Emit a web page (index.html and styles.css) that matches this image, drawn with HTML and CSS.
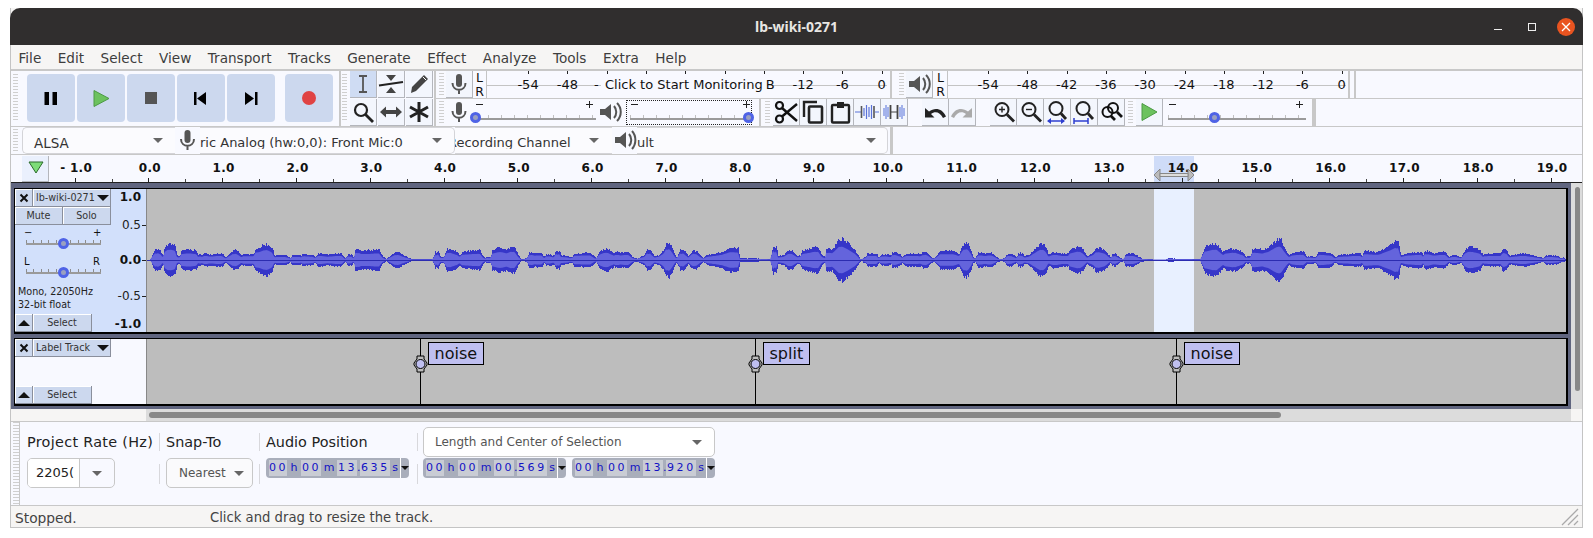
FILE: index.html
```html
<!DOCTYPE html>
<html>
<head>
	<meta charset="utf-8">
	<title>lb-wiki-0271</title>
	<link rel="stylesheet" href="styles.css">
</head>
<body>
<div class="window">
	<div class="titlebar">
		<div></div>
		<div class="title">lb-wiki-0271</div>
		<div class="winbtns">
			<div class="winbtn"><span class="win-min"></span></div>
			<div class="winbtn"><span class="win-max"></span></div>
			<div class="winbtn"><span class="win-close"><svg width="10" height="10" viewBox="0 0 10 10"><path d="M1 1L9 9M9 1L1 9" stroke="#fff" stroke-width="1.3"/></svg></span></div>
		</div>
	</div>
	<div class="menubar">
		<span>File</span><span>Edit</span><span>Select</span><span>View</span><span>Transport</span><span>Tracks</span><span>Generate</span><span>Effect</span><span>Analyze</span><span>Tools</span><span>Extra</span><span>Help</span>
	</div>

	<div class="toolbars">
		<div class="transport">
			<div class="grip grip-tall"></div>
			<div class="tbtn first"><svg width="48" height="48" viewBox="0 0 48 48"><path d="M17.5 18h4.500v13h-4.500zM25.500 18h4.500v13h-4.500z" fill="#000"/></svg></div>
			<div class="tbtn"><svg width="48" height="48" viewBox="0 0 48 48"><path d="M17 16.500L32 24.500L17 32.500z" fill="#6cc25e" stroke="#4c9a44"/></svg></div>
			<div class="tbtn"><svg width="48" height="48" viewBox="0 0 48 48"><rect x="18" y="18" width="12" height="12" fill="#555"/></svg></div>
			<div class="tbtn"><svg width="48" height="48" viewBox="0 0 48 48"><path d="M17 18h2.500v13H17zM29 18v13l-9-6.500z" fill="#000"/></svg></div>
			<div class="tbtn"><svg width="48" height="48" viewBox="0 0 48 48"><path d="M18 18v13l9-6.500zM28 18h2.500v13H28z" fill="#000"/></svg></div>
			<div class="tbtn rec"><svg width="48" height="48" viewBox="0 0 48 48"><circle cx="24" cy="24" r="7" fill="#e04343"/></svg></div>
		</div>
		<div class="tools">
			<div class="grip grip-tall"></div>
			<div class="toolgrid">
				<div class="ibtn on"><svg width="26" height="26" viewBox="0 0 26 26"><path d="M9 5h8M9 21h8M13 5v16" stroke="#555" stroke-width="1.800" fill="none"/></svg></div>
				<div class="ibtn"><svg width="26" height="26" viewBox="0 0 26 26"><path d="M8 4h10l-5 6zM8 22h10l-5-6z" fill="#444"/><path d="M1 14.500L25 11" stroke="#222" stroke-width="2.200"/></svg></div>
				<div class="ibtn"><svg width="26" height="26" viewBox="0 0 26 26"><path d="M5 22l1-6L18 4l4 4L10 20z" fill="#444"/><path d="M17 6l3 3" stroke="#fff"/></svg></div>
				<div class="ibtn"><svg width="26" height="26" viewBox="0 0 26 26"><circle cx="11" cy="11" r="6" fill="none" stroke="#222" stroke-width="2.200"/><path d="M15.500 15.500L23 23" stroke="#222" stroke-width="2.800"/></svg></div>
				<div class="ibtn"><svg width="26" height="26" viewBox="0 0 26 26"><path d="M2 13l6-5.500v3.500h10V7.500l6 5.500-6 5.500V15H8v3.500z" fill="#444"/></svg></div>
				<div class="ibtn"><svg width="26" height="26" viewBox="0 0 26 26"><path d="M13 3v20M4 8l18 10M22 8L4 18" stroke="#222" stroke-width="3"/></svg></div>
			</div>
		</div>
		<div class="stack">
			<div class="row">
				<div class="divider"></div>
				<div class="grip"></div>
				<div class="ibtn mic-btn"><svg width="26" height="26" viewBox="0 0 26 26"><rect x="10" y="3" width="6" height="13" rx="3" fill="#555"/><path d="M6.500 12c0 9 13 9 13 0M13 19v4" fill="none" stroke="#555" stroke-width="2"/></svg></div>
				<div class="lr"><span>L</span><span>R</span></div>
				<div class="meter meter-rec">
					<span>-54</span><span>-48</span><span class="partial">-</span><span></span><span></span><span></span><span></span><span>-12</span><span>-6</span><span>0</span>
					<div class="monitor"><b>Click to Start Monitoring</b><i>B</i></div>
				</div>
				<div class="divider div-meter"></div>
				<div class="grip grip-out"></div>
				<div class="ibtn spk-btn"><svg width="26" height="26" viewBox="0 0 26 26"><path d="M3 10h5l6-5v16l-6-5H3z" fill="#555"/><path d="M17 7c3 3.500 3 8.500 0 12M20 4c5 5 5 13 0 18" fill="none" stroke="#555" stroke-width="2"/></svg></div>
				<div class="lr lr-out"><span>L</span><span>R</span></div>
				<div class="meter meter-out">
					<span>-54</span><span>-48</span><span>-42</span><span>-36</span><span>-30</span><span>-24</span><span>-18</span><span>-12</span><span>-6</span><span>0</span>
				</div>
				<div class="divider div-end"></div>
				<div class="divider div-end2"></div>
			</div>
			<div class="row">
				<div class="divider"></div>
				<div class="grip"></div>
				<div class="icon mic-ico"><svg width="26" height="26" viewBox="0 0 26 26"><rect x="10" y="3" width="6" height="13" rx="3" fill="#555"/><path d="M6.500 12c0 9 13 9 13 0M13 19v4" fill="none" stroke="#555" stroke-width="2"/></svg></div>
				<div class="slider slider-rec"><em class="minus"></em><em class="plus"></em><div class="sl-track"></div><div class="thumb"></div></div>
				<div class="icon spk-ico"><svg width="26" height="26" viewBox="0 0 26 26"><path d="M3 10h5l6-5v16l-6-5H3z" fill="#555"/><path d="M17 7c3 3.500 3 8.500 0 12M20 4c5 5 5 13 0 18" fill="none" stroke="#555" stroke-width="2"/></svg></div>
				<div class="slider slider-play"><em class="minus"></em><em class="plus"></em><div class="sl-track"></div><div class="thumb"></div></div>
				<div class="divider div-edit"></div>
				<div class="grip grip-edit"></div>
				<div class="ibtn"><svg width="26" height="26" viewBox="0 0 26 26"><circle cx="6.500" cy="6.500" r="3.500" fill="none" stroke="#111" stroke-width="2.200"/><circle cx="6.500" cy="20" r="3.500" fill="none" stroke="#111" stroke-width="2.200"/><path d="M9 9l15 13M9 17.500L24 5" stroke="#111" stroke-width="2.400"/></svg></div>
				<div class="ibtn"><svg width="26" height="26" viewBox="0 0 26 26"><path d="M17 3H4v15" fill="none" stroke="#222" stroke-width="2.400"/><rect x="9" y="7.500" width="13" height="16" rx="1" fill="none" stroke="#222" stroke-width="2.600"/></svg></div>
				<div class="ibtn"><svg width="26" height="26" viewBox="0 0 26 26"><rect x="5" y="6" width="17" height="17.500" rx="1" fill="none" stroke="#222" stroke-width="2.400"/><rect x="10" y="3" width="7" height="6" fill="#222"/></svg></div>
				<div class="ibtn"><svg width="26" height="26" viewBox="0 0 26 26"><path d="M1 13h6M21 13h4M10 9v8M12.500 6v14M15 8v10M17.500 6v14" stroke="#5a72d8" stroke-width="1.200" fill="none"/><path d="M7.500 7v12M20 7v12" stroke="#555" stroke-width="1.600"/></svg></div>
				<div class="ibtn"><svg width="26" height="26" viewBox="0 0 26 26"><path d="M3 9v8M5 6v14M7 8v10M19 8v10M21 6v14M23 9v8" stroke="#6f86e0" stroke-width="1.200" fill="none"/><path d="M9.500 6v14M16.500 6v14" stroke="#444" stroke-width="1.800"/><path d="M9.500 13h7" stroke="#444"/></svg></div>
				<div class="ibtn undo"><svg width="26" height="26" viewBox="0 0 26 26"><path d="M3 9v9.500h9.500L9 15c4-3 9-2 12 4l3-1.500C20.500 9.500 13 8 7 12.500z" fill="#222"/></svg></div>
				<div class="ibtn"><svg width="26" height="26" viewBox="0 0 26 26"><path d="M23 9v9.500h-9.500L17 15c-4-3-9-2-12 4l-3-1.500C5.500 9.500 13 8 19 12.500z" fill="#aaa"/></svg></div>
				<div class="ibtn zoomfirst"><svg width="26" height="26" viewBox="0 0 26 26"><circle cx="12" cy="10.500" r="6.500" fill="none" stroke="#222" stroke-width="2"/><path d="M17 15.500L24 22.500" stroke="#222" stroke-width="2.800"/><path d="M9 10.500h6M12 7.500v6" stroke="#222" stroke-width="1.400"/></svg></div>
				<div class="ibtn"><svg width="26" height="26" viewBox="0 0 26 26"><circle cx="12" cy="10.500" r="6.500" fill="none" stroke="#222" stroke-width="2"/><path d="M17 15.500L24 22.500" stroke="#222" stroke-width="2.800"/><path d="M9 10.500h6" stroke="#222" stroke-width="1.400"/></svg></div>
				<div class="ibtn"><svg width="26" height="26" viewBox="0 0 26 26"><circle cx="12" cy="9.500" r="6.500" fill="none" stroke="#222" stroke-width="2"/><path d="M17 14.500L22 20" stroke="#222" stroke-width="2.800"/><path d="M4 22h16" stroke="#2f3fd0" stroke-width="1.500"/><path d="M3 22l4-3v6zM21 22l-4-3v6z" fill="#2f3fd0"/></svg></div>
				<div class="ibtn"><svg width="26" height="26" viewBox="0 0 26 26"><circle cx="12" cy="9.500" r="6.500" fill="none" stroke="#222" stroke-width="2"/><path d="M17 14.500L22 20" stroke="#222" stroke-width="2.800"/><path d="M3 22h14" stroke="#2f3fd0" stroke-width="1.500"/><path d="M3 19v6M17 19v6" stroke="#2f3fd0" stroke-width="1.500"/></svg></div>
				<div class="ibtn"><svg width="26" height="26" viewBox="0 0 26 26"><circle cx="9.500" cy="13" r="5" fill="none" stroke="#111" stroke-width="2"/><circle cx="15" cy="9" r="5" fill="none" stroke="#111" stroke-width="2"/><path d="M13 17l4 4M19 13l5 5" stroke="#111" stroke-width="2.800"/></svg></div>
				<div class="grip grip-play"></div>
				<div class="ibtn"><svg width="26" height="26" viewBox="0 0 26 26"><path d="M6 4.500L21 13L6 21.500z" fill="#6cc25e" stroke="#4c9a44"/></svg></div>
				<div class="slider slider-speed"><em class="minus"></em><em class="plus"></em><div class="sl-track"></div><div class="thumb"></div></div>
				<div class="divider div-speed"></div>
			</div>
		</div>
	</div>

	<div class="devices">
		<div class="grip grip-dev"></div>
		<div class="combo combo-host"><div class="combo-text">ALSA</div><div class="arrow"></div></div>
		<div class="icon dev-ico"><svg width="25" height="26" viewBox="0 0 25 26"><rect x="9.500" y="3" width="6" height="13" rx="3" fill="#555"/><path d="M6 12c0 9 13 9 13 0M12.500 19v4" fill="none" stroke="#555" stroke-width="2"/></svg></div>
		<div class="combo combo-mic"><div class="combo-text">ric Analog (hw:0,0): Front Mic:0</div><div class="arrow"></div></div>
		<div class="combo combo-chan"><div class="combo-text">Recording Channel</div><div class="arrow"></div></div>
		<div class="icon dev-ico"><svg width="25" height="26" viewBox="0 0 25 26"><path d="M3 10h5l6-5v16l-6-5H3z" fill="#555"/><path d="M17 7c3 3.500 3 8.500 0 12M20 4c4.500 5 4.500 13 0 18" fill="none" stroke="#555" stroke-width="2"/></svg></div>
		<div class="combo combo-out"><div class="combo-text">ult</div><div class="arrow"></div></div>
		<div class="divider div-dev"></div>
	</div>

	<div class="ruler">
		<div class="ruler-sel"></div>
		<div class="playhead"><svg width="16" height="13" viewBox="0 0 16 13"><path d="M1 1h14L8 12z" fill="#7ddc78" stroke="#2c6b2c"/></svg></div>
		<div class="secs">
			<span>- 1.0</span><span>0.0</span><span>1.0</span><span>2.0</span><span>3.0</span><span>4.0</span><span>5.0</span><span>6.0</span><span>7.0</span><span>8.0</span><span>9.0</span><span>10.0</span><span>11.0</span><span>12.0</span><span>13.0</span><span>14.0</span><span>15.0</span><span>16.0</span><span>17.0</span><span>18.0</span><span>19.0</span>
		</div>
		<svg class="sel-handle" width="42" height="14" viewBox="0 0 42 14"><path d="M7 1v12L1 7zM35 1v12l6-6z" fill="#bbb" stroke="#888"/><path d="M7 5.500h28v3H7z" fill="#ddd" stroke="#888"/></svg>
	</div>

	<div class="trackarea">
		<div class="tracks">
			<div class="track wavetrack">
				<div class="panel">
					<div class="panel-head">
						<div class="pbtn pclose"><svg width="10" height="10" viewBox="0 0 10 10"><path d="M1.500 1.500L8.500 8.500M8.500 1.500L1.500 8.500" stroke="#111" stroke-width="2"/></svg></div>
						<div class="pbtn ptitle"><span>lb-wiki-0271</span><i></i></div>
					</div>
					<div class="panel-head">
						<div class="pbtn pmute">Mute</div>
						<div class="pbtn psolo">Solo</div>
					</div>
					<div class="pslider"><em class="pl">−</em><em class="pr">+</em><div class="pl-track"></div><div class="thumb"></div></div>
					<div class="pslider"><em class="pl">L</em><em class="pr">R</em><div class="pl-track"></div><div class="thumb"></div></div>
					<div class="pinfo">Mono, 22050Hz<br>32-bit float</div>
					<div class="panel-foot">
						<div class="pbtn pclose"><i class="up"></i></div>
						<div class="pbtn pselect">Select</div>
					</div>
				</div>
				<div class="vruler">
					<div class="strong"><span>1.0</span></div>
					<div class="tick"><span>0.5</span></div>
					<div class="strong tick long"><span>0.0</span></div>
					<div class="tick"><span>-0.5</span></div>
					<div class="strong"><span>-1.0</span></div>
				</div>
				<div class="wave" id="wave"></div>
			</div>
			<div class="track labeltrack">
				<div class="panel panel-label">
					<div class="panel-head">
						<div class="pbtn pclose"><svg width="10" height="10" viewBox="0 0 10 10"><path d="M1.500 1.500L8.500 8.500M8.500 1.500L1.500 8.500" stroke="#111" stroke-width="2"/></svg></div>
						<div class="pbtn ptitle"><span>Label Track</span><i></i></div>
					</div>
					<div class="panel-foot">
						<div class="pbtn pclose"><i class="up"></i></div>
						<div class="pbtn pselect">Select</div>
					</div>
				</div>
				<div class="vruler vruler-empty"></div>
				<div class="labels">
					<div class="mark m1"><svg width="15" height="18" viewBox="0 0 15 18"><path d="M4 1h7v3l3 4v2l-3 4v3H4v-3l-3-4V8l3-4z" fill="#bdbdbd" stroke="#000"/><ellipse cx="7.500" cy="9" rx="4.500" ry="4.500" fill="#bfbff0" stroke="#000"/></svg><span>noise</span></div>
					<div class="mark m2"><svg width="15" height="18" viewBox="0 0 15 18"><path d="M4 1h7v3l3 4v2l-3 4v3H4v-3l-3-4V8l3-4z" fill="#bdbdbd" stroke="#000"/><ellipse cx="7.500" cy="9" rx="4.500" ry="4.500" fill="#bfbff0" stroke="#000"/></svg><span>split</span></div>
					<div class="mark m3"><svg width="15" height="18" viewBox="0 0 15 18"><path d="M4 1h7v3l3 4v2l-3 4v3H4v-3l-3-4V8l3-4z" fill="#bdbdbd" stroke="#000"/><ellipse cx="7.500" cy="9" rx="4.500" ry="4.500" fill="#bfbff0" stroke="#000"/></svg><span>noise</span></div>
				</div>
			</div>
		</div>
		<div class="vscroll"><div class="vthumb"></div></div>
	</div>

	<div class="hscroll">
		<div class="hs-left"></div>
		<div class="hs-track"><div class="hthumb"></div></div>
		<div class="hs-corner"></div>
	</div>

	<div class="selbar">
		<div class="grip grip-sel"></div>
		<div class="selcol col-rate">
			<div class="sellabel rate-label">Project Rate (Hz)</div>
			<div class="bigcombo rate"><div class="rate-val">2205(</div><div class="rate-btn"><div class="arrow"></div></div></div>
		</div>
		<div class="sep"><i></i><i></i></div>
		<div class="selcol col-snap">
			<div class="sellabel">Snap-To</div>
			<div class="bigcombo snap"><span>Nearest</span><div class="arrow"></div></div>
		</div>
		<div class="sep"><i></i><i></i></div>
		<div class="selcol col-pos">
			<div class="sellabel">Audio Position</div>
			<div class="clock">
				<span class="c c2">00</span><span class="u uh">h</span><span class="c">00</span><span class="u um">m</span><span class="c">13</span><span class="u ud">.</span><span class="c c3">635</span><span class="u us">s</span><span class="drop"></span>
			</div>
		</div>
		<div class="sep"><i></i><i></i></div>
		<div class="selcol col-sel">
			<div class="bigcombo lencombo"><span>Length and Center of Selection</span><div class="arrow"></div></div>
			<div class="clocks">
				<div class="clock">
					<span class="c c2">00</span><span class="u uh">h</span><span class="c">00</span><span class="u um">m</span><span class="c">00</span><span class="u ud">.</span><span class="c c3">569</span><span class="u us">s</span><span class="drop"></span>
				</div>
				<div class="clock">
					<span class="c c2">00</span><span class="u uh">h</span><span class="c">00</span><span class="u um">m</span><span class="c">13</span><span class="u ud">.</span><span class="c c3">920</span><span class="u us">s</span><span class="drop"></span>
				</div>
			</div>
		</div>
	</div>

	<div class="statusbar">
		<div class="st-left">Stopped.</div>
		<div class="st-hint">Click and drag to resize the track.</div>
		<svg class="sizer" width="18" height="18" viewBox="0 0 18 18"><path d="M1 17L17 1M7 17L17 7M13 17l4-4" stroke="#aaa" stroke-width="1.300"/></svg>
	</div>
</div>
<script src="waveform.js"></script>
</body>
</html>
```

FILE: styles.css
```css
html, body {
	margin: 0;
	padding: 0;
	background: #fff;
	overflow: hidden;
}
body {
	font-family: "DejaVu Sans", sans-serif;
	color: #222;
}
.window {
	box-sizing: border-box;
	width: 1573px;
	height: 520px;
	margin: 8px 0 0 10px;
	border: 1px solid #c4c4c4;
	border-top: 0;
	background: #f6f5f4;
}

/* title + menu */
.titlebar {
	height: 37px;
	margin: 0 -1px;
	display: grid;
	grid-template-columns: 1fr auto 1fr;
	align-items: center;
	background: #302e2e;
	border-radius: 10px 10px 0 0;
}
.title {
	font-family: "Noto Sans", sans-serif;
	font-weight: 700;
	font-size: 14px;
	color: #e8e6e3;
}
.winbtns {
	display: flex;
	justify-content: flex-end;
}
.winbtn {
	width: 34px;
	height: 37px;
	display: flex;
	align-items: center;
	justify-content: center;
}
.win-min {
	width: 8px;
	height: 1px;
	background: #eee;
	margin-top: 6px;
	border-radius: 0;
}
.win-max {
	box-sizing: border-box;
	width: 8px;
	height: 8px;
	border: 1px solid #eee;
}
.win-close {
	width: 18px;
	height: 18px;
	border-radius: 50%;
	background: #e95420;
	display: flex;
	align-items: center;
	justify-content: center;
}
.menubar {
	box-sizing: border-box;
	height: 26px;
	padding: 3px 0 0 7.500px;
	display: flex;
	gap: 16.500px;
	font-size: 13.600px;
	line-height: 20px;
	color: #3d3d3d;
	border-bottom: 2px solid #c8c8c8;
}

/* toolbars */
.toolbars {
	display: flex;
	height: 56px;
	background: #f8f9ff;
}
.grip {
	flex: none;
	width: 5px;
	height: 22px;
	margin: 2px 0 0 3px;
	background: repeating-linear-gradient(#cfcfcf 0 1px, #f8f9ff 1px 3px);
}
.grip-tall {
	height: 48px;
	margin: 3px 0 0 2px;
}
.transport {
	display: flex;
	flex: none;
	width: 328px;
	height: 55px;
	border-bottom: 1px solid #c8c8c8;
}
.tbtn {
	flex: none;
	width: 48px;
	height: 48px;
	margin: 3px 0 0 2px;
	background: #ccd8ee;
	border-radius: 4px;
}
.tbtn.first {
	margin-left: 9px;
}
.tbtn.rec {
	margin-left: 10px;
}
.tools {
	display: flex;
	flex: none;
	width: 95px;
	height: 55px;
	box-shadow: inset 2px 0 0 #c8c8c8;
	border-bottom: 1px solid #c8c8c8;
	padding-left: 2px;
	margin-right: -2px;
}
.tools .grip-tall {
	margin-left: 1px;
}
.toolgrid {
	display: grid;
	grid-template-columns: 27px 27px 27px;
	grid-template-rows: 27px 27px;
	gap: 1px 1px;
	margin-left: 3px;
}
.ibtn {
	flex: none;
	box-sizing: border-box;
	width: 27px;
	height: 27px;
	background: #f3f6fd;
	border-right: 1px solid #b4b6bc;
	border-bottom: 1px solid #b4b6bc;
}
.ibtn.on {
	background: #cfdcf3;
}
.ibtn svg, .icon svg {
	display: block;
}
.stack {
	flex: 1;
	min-width: 0;
}
.row {
	display: flex;
	height: 27px;
	border-bottom: 1px solid #c8c8c8;
}
.divider {
	flex: none;
	width: 2px;
	height: 100%;
	background: #c8c8c8;
}
.mic-btn {
	margin-left: 2px;
}
.spk-btn {
	margin-left: 2px;
}
.lr {
	flex: none;
	width: 11px;
	margin-left: 1px;
	font-size: 12.500px;
	line-height: 13.500px;
	color: #111;
	text-align: center;
}
.lr span {
	display: block;
}
.lr-out {
	margin-left: 2px;
}
.meter {
	position: relative;
	flex: none;
	display: flex;
	overflow: hidden;
	height: 27px;
	margin-left: 1px;
	background: linear-gradient(#c4c4c4, #c4c4c4) 0 14px / 100% 1px no-repeat;
	border-left: 1px solid #c4c4c4;
	box-sizing: border-box;
}
.meter-rec {
	width: 401px;
	padding-left: 21.400px;
}
.meter-out {
	width: 399px;
	padding-left: 20.400px;
}
.meter span {
	position: relative;
	flex: none;
	width: 39.300px;
	text-align: center;
	font-size: 13px;
	line-height: 27px;
	color: #111;
}
.meter span.partial {
	text-align: left;
	text-indent: 7px;
}
.meter span::before {
	content: "";
	position: absolute;
	left: 50%;
	top: 0;
	width: 1px;
	height: 3px;
	background: #222;
}
.monitor {
	position: absolute;
	left: 114px;
	top: 6px;
	display: flex;
	height: 16px;
	font-size: 13px;
	line-height: 16px;
	color: #111;
}
.monitor b {
	font-weight: 400;
	padding: 0 4px;
	background: #f8f9ff;
}
.monitor i {
	font-style: normal;
	margin-left: -1px;
}
.div-meter {
	margin-left: 3px;
}
.grip-out {
	margin-left: 7px;
}
.div-end {
	margin-left: 2px;
}
.div-end2 {
	margin-left: 4px;
}
.icon {
	flex: none;
}
.mic-ico {
	width: 26px;
	margin-left: 2px;
}
.spk-ico {
	width: 26px;
	margin-left: 1px;
}

/* sliders */
.slider {
	position: relative;
	flex: none;
	height: 27px;
	box-sizing: border-box;
}
.slider em {
	position: absolute;
	top: 5px;
	width: 7px;
	height: 1px;
	background: #222;
}
.slider em.minus {
	left: 1px;
}
.slider em.plus {
	right: 3px;
}
.slider em.plus::after {
	content: "";
	position: absolute;
	left: 3px;
	top: -3px;
	width: 1px;
	height: 7px;
	background: #222;
}
.sl-track {
	position: absolute;
	left: 0;
	right: 0;
	top: 16px;
	height: 5px;
	background:
		linear-gradient(#9a9a9a, #9a9a9a) 0 100% / 100% 2px no-repeat,
		repeating-linear-gradient(90deg, #c0c0c0 0 1px, transparent 1px 13px);
}
.thumb {
	position: absolute;
	box-sizing: border-box;
	width: 11px;
	height: 11px;
	border: 3px solid #4f63e6;
	border-radius: 50%;
	background: #9aa0c0;
}
.slider .thumb {
	top: 13px;
}
.slider-rec {
	width: 121px;
	margin-left: 3px;
}
.slider-rec .thumb {
	left: -5px;
}
.slider-play {
	width: 128px;
	outline: 1px dotted #222;
	outline-offset: -2px;
	margin-left: 2px;
}
.slider-play .sl-track {
	left: 5px;
	right: 1px;
}
.slider-play em.minus {
	left: 6px;
}
.slider-play .thumb {
	right: -1px;
}
.slider-speed {
	width: 138px;
	margin-left: 5px;
}
.slider-speed .thumb {
	left: 41px;
}
.div-edit {
	margin-left: 6px;
}
.grip-edit {
	margin-left: 4px;
}
.grip-edit + .ibtn {
	margin-left: 3px;
}
.undo {
	margin-left: 14px;
}
.zoomfirst {
	margin-left: 14px;
}
.grip-play {
	margin-left: 3px;
}
.grip-play + .ibtn {
	margin-left: 3px;
}
.div-speed {
	width: 4px;
	margin-left: 6px;
}

.devices {
	display: flex;
	height: 27px;
	background: #f8f9ff;
	border-bottom: 1px solid #c8c8c8;
}
.grip-dev {
	margin: 2px 0 0 2px;
	width: 5px;
}
.combo {
	position: relative;
	flex: none;
	box-sizing: border-box;
	height: 27px;
	background: #fbfbfe;
	border: 1px solid #d4d4d8;
	font-size: 13px;
	color: #333;
}
.combo-text {
	overflow: hidden;
	white-space: nowrap;
	height: 14px;
	line-height: 16px;
	margin-top: 7px;
}
.combo-host .combo-text {
	font-size: 13.500px;
}
.arrow {
	width: 0;
	height: 0;
	border-left: 5px solid transparent;
	border-right: 5px solid transparent;
	border-top: 5px solid #666;
}
.combo .arrow {
	position: absolute;
	top: 10px;
}
.combo-host {
	width: 153px;
	margin-left: 4px;
	border-radius: 5px 0 0 5px;
	border-right: 0;
}
.combo-host .combo-text {
	padding-left: 11px;
}
.combo-host .arrow {
	left: 130px;
}
.dev-ico {
	width: 25px;
	background: #f8f9ff;
}
.combo-mic {
	width: 255px;
	border-left: 0;
	border-radius: 0 5px 5px 0;
}
.combo-mic .arrow {
	left: 232px;
}
.combo-chan {
	width: 157px;
	border-left: 0;
	border-right: 0;
}
.combo-chan .combo-text {
	text-indent: -7px;
}
.combo-chan .arrow {
	left: 134px;
}
.combo-out {
	width: 251px;
	border-left: 0;
	border-radius: 0 5px 5px 0;
}
.combo-out .arrow {
	left: 229px;
}
.div-dev {
	width: 3px;
	margin-left: 2px;
}

/* timeline */
.ruler {
	position: relative;
	display: flex;
	overflow: hidden;
	height: 28px;
	box-sizing: border-box;
	padding-left: 11px;
	background: #f8f9ff;
	border-bottom: 1px solid #222;
}
.ruler-sel {
	position: absolute;
	left: 1143px;
	top: 1px;
	bottom: 0;
	width: 40px;
	background: #cfdcf8;
}
.playhead {
	position: relative;
	z-index: 2;
	flex: none;
	width: 27px;
	box-sizing: border-box;
	padding: 5px 0 0 6px;
	background: #eaf0fd;
	border-right: 1px solid #b4b6bc;
	border-bottom: 1px solid #b4b6bc;
	margin-top: 1px;
}
.playhead svg {
	display: block;
}
.secs {
	position: relative;
	display: flex;
	margin-left: -11.300px;
	font-size: 12px;
	font-weight: 700;
	line-height: 26px;
	color: #111;
}
.secs span {
	position: relative;
	flex: none;
	width: 73.800px;
	text-align: center;
	letter-spacing: .3px;
	padding-left: 3px;
	box-sizing: border-box;
	white-space: pre;
}
.secs span::before {
	content: "";
	position: absolute;
	left: 36.900px;
	bottom: 0;
	width: 1px;
	height: 4px;
	background: #222;
}
.secs span::after {
	content: "";
	position: absolute;
	left: 100%;
	bottom: 0;
	width: 1px;
	height: 3px;
	background: #444;
}
.sel-handle {
	position: absolute;
	left: 1142px;
	top: 13px;
}

/* tracks */
.trackarea {
	display: flex;
	height: 226px;
}
.tracks {
	flex: none;
	box-sizing: border-box;
	width: 1560px;
	padding: 5px 3px 3px;
	background: #60657f;
}
.vscroll {
	flex: 1;
	background: #dcdcdc;
}
.vthumb {
	width: 5px;
	height: 204px;
	margin: 4px 0 0 4px;
	border-radius: 3px;
	background: #888;
}
.track {
	display: flex;
	box-sizing: border-box;
	border: 1px solid #000;
	border-right-width: 2px;
	border-bottom-width: 2px;
}
.wavetrack {
	height: 146px;
}
.labeltrack {
	height: 68px;
	margin-top: 4px;
}
.panel {
	flex: none;
	display: flex;
	flex-direction: column;
	width: 96px;
	background: #d2e0fb;
}
.panel-label {
	background: #f8f9ff;
}
.panel-head, .panel-foot {
	display: flex;
	height: 18px;
	flex: none;
}
.panel-foot {
	margin-top: auto;
}
.pbtn {
	box-sizing: border-box;
	height: 18px;
	background: #ccd8ee;
	border-right: 1px solid #8a8f9c;
	border-bottom: 1px solid #8a8f9c;
	box-shadow: inset 1px 1px 0 #fff;
	font-size: 9.600px;
	line-height: 17px;
	text-align: center;
	color: #333;
	display: flex;
	align-items: center;
	justify-content: center;
}
.pclose {
	width: 18px;
}
.ptitle {
	width: 78px;
	justify-content: space-between;
	padding: 0 1px 0 3px;
	white-space: nowrap;
}
.ptitle i {
	width: 0;
	height: 0;
	border-left: 6px solid transparent;
	border-right: 6px solid transparent;
	border-top: 6px solid #111;
}
.up {
	width: 0;
	height: 0;
	border-left: 6px solid transparent;
	border-right: 6px solid transparent;
	border-bottom: 6px solid #111;
}
.pmute {
	width: 48px;
}
.psolo {
	width: 48px;
}
.pselect {
	width: 59px;
}
.pslider {
	position: relative;
	flex: none;
	height: 29px;
}
.pslider em {
	position: absolute;
	top: 2px;
	font-style: normal;
	font-size: 10px;
	line-height: 12px;
	color: #111;
}
.pl {
	left: 9px;
}
.pr {
	left: 78px;
}
.pl-track {
	position: absolute;
	left: 11px;
	width: 75px;
	top: 15px;
	height: 5px;
	background:
		linear-gradient(#9a9a9a, #9a9a9a) 0 100% / 100% 2px no-repeat,
		repeating-linear-gradient(90deg, #8c8c8c 0 1px, transparent 1px 7.400px);
}
.pslider .thumb {
	left: 43px;
	top: 13px;
}
.pinfo {
	margin: 2px 0 0 3px;
	font-size: 9.600px;
	line-height: 13px;
	color: #222;
	white-space: nowrap;
}
.vruler {
	flex: none;
	box-sizing: border-box;
	width: 36px;
	background: #d2e0fb;
	border-right: 1px solid #888;
	font-size: 12px;
	line-height: 14px;
	color: #222;
}
.vruler-empty {
	background: #f8f9ff;
}
.vruler div {
	display: flex;
	justify-content: flex-end;
	align-items: center;
	height: 14px;
	padding-right: 5px;
}
.vruler div:nth-child(1) { margin-top: 1px; }
.vruler div:nth-child(2) { margin-top: 14px; }
.vruler div:nth-child(3) { margin-top: 21px; }
.vruler div:nth-child(4) { margin-top: 22px; }
.vruler div:nth-child(5) { margin-top: 14px; }
.vruler .strong {
	font-weight: 700;
	color: #111;
}
.vruler .tick {
	padding-right: 0;
}
.vruler .tick::after {
	content: "";
	width: 4px;
	height: 1px;
	margin-left: 1px;
	background: #222;
}
.wave {
	flex: 1;
	min-width: 0;
	background: #bdbdbd;
}
.wave svg {
	display: block;
}
.labels {
	position: relative;
	flex: 1;
	min-width: 0;
	background: #bdbdbd;
}
.mark {
	position: absolute;
	top: 0;
	bottom: 0;
	width: 1px;
	background: #000;
}
.mark svg {
	position: absolute;
	left: -7px;
	top: 16px;
}
.mark span {
	position: absolute;
	left: 8px;
	top: 3px;
	box-sizing: border-box;
	height: 23px;
	padding: 0 5.500px;
	background: #bfbff0;
	border: 1px solid #000;
	font-size: 16px;
	line-height: 21px;
	color: #111;
}
.m1 { left: 273px; }
.m2 { left: 608px; }
.m3 { left: 1029px; }

.hscroll {
	display: flex;
	height: 12px;
}
.hs-left {
	width: 135px;
}
.hs-track {
	flex: 1;
	background: #dcdcdc;
}
.hthumb {
	width: 1132px;
	height: 6px;
	margin: 3px 0 0 3px;
	border-radius: 3px;
	background: #888;
}
.hs-corner {
	width: 11px;
}

/* selection bar */
.selbar {
	display: flex;
	box-sizing: border-box;
	height: 85px;
	background: #f8f9ff;
	border-top: 1px solid #c8c8c8;
	border-bottom: 1px solid #c8c8c8;
}
.grip-sel {
	width: 6px;
	height: 83px;
	margin: 0 0 0 2px;
	padding-right: 0;
	border-right: 1px solid #c8c8c8;
}
.selcol {
	flex: none;
	box-sizing: border-box;
}
.sellabel {
	height: 30px;
	margin-top: 5px;
	margin-bottom: 1px;
	font-size: 14.400px;
	line-height: 30px;
	color: #222;
	white-space: nowrap;
}
.rate-label {
	letter-spacing: .3px;
}
.col-rate {
	width: 139px;
	padding-left: 7px;
}
.col-snap {
	width: 99px;
	padding-left: 6px;
}
.col-pos {
	width: 157px;
	padding-left: 6px;
}
.col-sel {
	padding: 5px 0 0 5px;
}
.sep {
	flex: none;
	width: 1px;
}
.sep i {
	display: block;
	width: 1px;
	height: 18px;
	margin-top: 11px;
	background: #d8d8dc;
}
.sep i + i {
	height: 20px;
	margin-top: 13px;
}
.bigcombo {
	box-sizing: border-box;
	display: flex;
	align-items: center;
	height: 30px;
	border: 1px solid #c8c8c8;
	border-radius: 5px;
	font-size: 12px;
	color: #555;
}
.rate {
	width: 88px;
	background: #f8f9ff;
	overflow: hidden;
	font-size: 13px;
}
.rate-val {
	width: 52px;
	height: 28px;
	padding-left: 8px;
	box-sizing: border-box;
	line-height: 28px;
	background: #fff;
	color: #222;
	border-right: 1px solid #c8c8c8;
}
.rate-btn {
	flex: 1;
	display: flex;
	justify-content: center;
}
.snap {
	width: 87px;
	padding-left: 12px;
	background: #fafafc;
	gap: 8px;
}
.lencombo {
	width: 292px;
	padding: 0 12px 0 11px;
	justify-content: space-between;
	background: #fff;
	font-size: 12px;
}
.clocks {
	display: flex;
	gap: 6px;
	margin-top: 1px;
}
.clock {
	display: flex;
	box-sizing: border-box;
	width: 143px;
	height: 20px;
	padding: 2px 0 2px 3px;
	border-radius: 4px;
	background: #a9aebb;
	font-size: 11px;
	line-height: 16px;
	color: #1212c4;
	letter-spacing: 2.600px;
}
.c {
	flex: none;
	width: 20px;
	padding-left: 1px;
	box-sizing: border-box;
	background: #c9ccd4;
}
.c2 {
	width: 18px;
	padding-left: 0;
}
.c3 {
	width: 30px;
}
.u {
	flex: none;
	width: 14px;
	text-align: center;
	letter-spacing: 0;
}
.um {
	width: 16px;
}
.ud {
	width: 3px;
}
.us {
	width: 10px;
}
.drop {
	flex: none;
	box-sizing: border-box;
	width: 9px;
	height: 20px;
	margin-top: -2px;
	padding: 8px 0 0 0;
	border-left: 1px solid #fff;
}
.drop::after {
	content: "";
	display: block;
	width: 0;
	height: 0;
	border-left: 4px solid transparent;
	border-right: 4px solid transparent;
	border-top: 4px solid #111;
}

/* status */
.statusbar {
	display: flex;
	align-items: center;
	height: 21px;
	font-size: 13.200px;
	color: #444;
	background: #f6f5f4;
}
.st-left, .st-hint {
	padding-top: 2px;
}
.st-left {
	width: 199px;
	padding-left: 4px;
	box-sizing: border-box;
	font-size: 13.800px;
}
.sizer {
	margin-left: auto;
	margin-right: 3px;
}
```

FILE: waveform.js
```js
// envelope picked off the recording: [screen x offset, [zoomed x, zoomed amp, ...]]
// zoomed values are 3x, so x = offset + zx / 3 and amp = za / 3
const parts = [
	[140, [20,1, 36,3, 42,20, 50,33, 58,25, 66,8, 72,8, 78,38, 88,50, 100,45, 106,15, 122,7, 128,28, 145,32, 165,28, 172,5, 180,18, 188,6, 195,20, 210,15, 240,20, 250,10, 258,3, 268,15, 285,30, 298,15, 305,5, 312,18, 335,18, 342,5, 350,35, 362,38, 378,48, 392,35, 400,8, 412,15, 430,15, 445,8, 452,2, 460,15, 475,15, 483,2, 490,18, 515,15, 522,5, 530,10, 538,20, 560,15, 600,20, 610,5, 618,3, 628,18, 638,5, 645,2, 650,35, 660,28, 700,30, 712,32, 722,12, 735,2, 745,5, 758,15, 770,25, 785,15, 800,8, 810,3, 880,3, 885,10, 890,28, 897,8, 915,10, 925,35, 945,25, 960,10, 970,25, 1015,30, 1025,10, 1035,3, 1045,10, 1055,2, 1060,30]],
	[500, [0,38, 20,30, 38,40, 50,15, 58,3, 75,3, 85,8, 92,25, 100,20, 120,22, 126,12, 135,2, 142,18, 165,10, 172,30, 178,15, 200,12, 205,3, 212,10, 220,4, 226,20, 265,22, 280,8, 290,3, 302,25, 318,35, 345,15, 350,25, 360,20, 380,25, 392,10, 410,2, 425,10, 438,15, 445,32, 460,10, 468,12, 480,15, 495,30, 503,53, 510,40, 520,15, 528,3, 535,10, 545,32, 558,15, 565,3, 575,20, 582,30, 600,10, 610,4, 625,15, 650,20, 670,25, 695,38, 710,35, 715,5, 760,5, 800,3, 815,2, 823,45, 830,10, 855,15, 870,30, 890,10, 905,15, 910,28, 950,40, 960,15, 980,3, 982,35, 1000,30, 1022,65, 1040,50, 1060,30, 1075,5]],
	[860, [0,3, 10,3, 15,10, 20,4, 25,20, 45,20, 50,10, 58,3, 65,15, 75,18, 90,12, 95,3, 100,25, 118,15, 125,3, 135,15, 145,20, 185,18, 195,25, 210,8, 222,3, 235,15, 245,28, 275,28, 300,15, 312,45, 318,52, 328,30, 335,8, 350,5, 358,22, 375,18, 390,22, 410,5, 430,2, 440,10, 447,20, 462,10, 470,2, 480,22, 490,10, 510,15, 530,35, 545,50, 552,40, 565,5, 572,18, 583,25, 600,20, 620,20, 628,5, 632,30, 655,40, 665,30, 680,5, 690,15, 705,25, 712,38, 730,30, 745,10, 755,2, 760,20, 778,5, 795,3, 800,18, 815,20, 840,5, 860,3, 880,1, 920,1, 928,6, 940,4, 990,4, 1000,1]],
	[1100, [305,3, 318,40, 345,50, 360,30, 372,15, 378,30, 400,35, 425,22, 435,5, 445,12, 455,3, 460,35, 490,30, 510,40, 537,65, 555,25, 565,10, 580,22, 605,25, 620,5, 628,12, 650,8, 660,25, 690,20, 700,8, 710,8, 720,15, 775,20, 790,5, 795,28, 820,25, 840,25, 880,50, 890,58, 898,10, 920,20, 960,25, 970,5, 978,28, 1000,20, 1030,25, 1045,5, 1060,15, 1075,10, 1085,3, 1098,30, 1110,40, 1135,30, 1150,5, 1155,18, 1195,20, 1205,15, 1212,35, 1225,10, 1240,15, 1270,20, 1310,10, 1330,5, 1345,15, 1370,12, 1380,2, 1384,8, 1394,2]]
];

const knots = [];
parts.forEach(([offset, list]) => {
	for (let i = 0; i < list.length; i += 2) {
		knots.push([offset + list[i] / 3, list[i + 1] / 3]);
	}
});

let seed = 7;
function rnd() {
	seed = (seed * 16807) % 2147483647;
	return seed / 2147483647;
}

function ampAt(x) {
	for (let i = 1; i < knots.length; i++) {
		if (x <= knots[i][0]) {
			const a = knots[i - 1], b = knots[i];
			return a[1] + (b[1] - a[1]) * (x - a[0]) / (b[0] - a[0] || 1);
		}
	}
	return 0.5;
}

// peak hold, the drawn envelope is blockier than straight lines between knots
function heldAmp(x) {
	return Math.max(ampAt(x - 1.5), ampAt(x), ampAt(x + 1.5));
}

const waveLeft = 147, waveTop = 189, waveWidth = 1419, waveHeight = 143, mid = 260;
let outerUp = [], outerDown = [], innerUp = [], innerDown = [];
for (let x = waveLeft + 3; x < waveLeft + waveWidth; x++) {
	const a = Math.max(heldAmp(x), 0.5);
	const up = a * (0.9 + rnd() * 0.18);
	const down = a * (0.9 + rnd() * 0.18);
	const rms = Math.max(a * 0.62, 0.5);
	outerUp.push(x + "," + (mid - up).toFixed(1), (x + 1) + "," + (mid - up).toFixed(1));
	outerDown.unshift((x + 1) + "," + (mid + down).toFixed(1), x + "," + (mid + down).toFixed(1));
	innerUp.push(x + "," + (mid - rms).toFixed(1));
	innerDown.unshift(x + "," + (mid + rms).toFixed(1));
}

document.getElementById("wave").innerHTML =
	'<svg width="' + waveWidth + '" height="' + waveHeight + '" viewBox="' + waveLeft + ' ' + waveTop + ' ' + waveWidth + ' ' + waveHeight + '">' +
	'<rect x="1154" y="' + waveTop + '" width="40" height="' + waveHeight + '" fill="#e8f0ff"/>' +
	'<polygon points="' + outerUp.concat(outerDown).join(" ") + '" fill="#3636c8" shape-rendering="crispEdges"/>' +
	'<polygon points="' + innerUp.concat(innerDown).join(" ") + '" fill="#6464dc"/>' +
	'<path d="M' + waveLeft + ' 260.500H' + (waveLeft + waveWidth) + '" stroke="#2c2cb0" stroke-width="1"/>' +
	'</svg>';
```
